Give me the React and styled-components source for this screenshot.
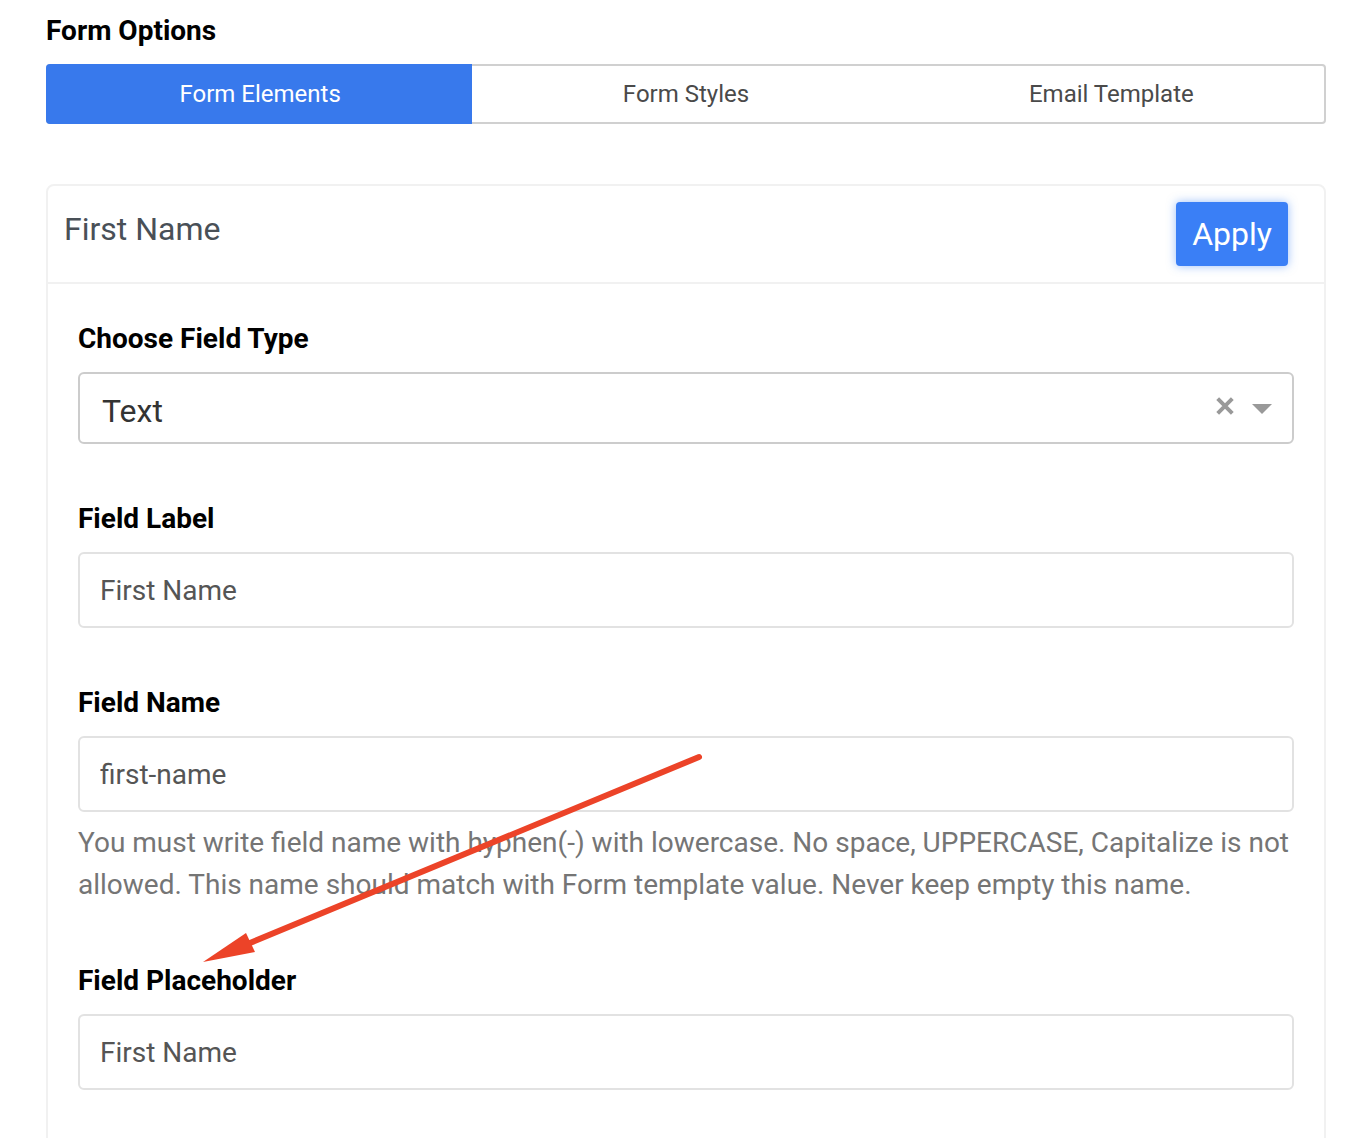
import styled, { createGlobalStyle } from 'styled-components'

const GlobalStyle = createGlobalStyle`
    html, body {
        margin: 0;
        padding: 0;
        background: #fff;
        overflow: hidden;
    }
    * {
        box-sizing: border-box;
    }
`

export default function App() {
    return (
        <Page>
            <GlobalStyle />
            <Title>Form Options</Title>
            <Tabs>
                <Tab $active>Form Elements</Tab>
                <Tab>Form Styles</Tab>
                <Tab>Email Template</Tab>
            </Tabs>
            <Card>
                <CardHeader>
                    <CardTitle>First Name</CardTitle>
                    <ApplyButton>Apply</ApplyButton>
                </CardHeader>
                <CardBody>
                    <Field>
                        <Label>Choose Field Type</Label>
                        <Select>
                            <SelectValue>Text</SelectValue>
                            <ClearIcon viewBox="0 0 16 16">
                                <path d="M1.5 1.5 L14.5 14.5 M14.5 1.5 L1.5 14.5" />
                            </ClearIcon>
                            <Caret />
                        </Select>
                    </Field>
                    <Field>
                        <Label>Field Label</Label>
                        <Input defaultValue="First Name" />
                    </Field>
                    <Field>
                        <Label>Field Name</Label>
                        <Input defaultValue="first-name" />
                        <Help>
                            You must write field name with hyphen(-) with lowercase. No space, UPPERCASE, Capitalize is not allowed. This name should match with Form template value. Never keep empty this name.
                        </Help>
                    </Field>
                    <Field>
                        <Label>Field Placeholder</Label>
                        <Input defaultValue="First Name" />
                    </Field>
                </CardBody>
            </Card>
            <Arrow viewBox="0 0 1370 1138">
                <path d="M699 757 L250 943" />
                <polygon points="203,962 246,933 255,952" />
            </Arrow>
        </Page>
    )
}

const Page = styled.div`
    position: relative;
    width: 1370px;
    height: 1138px;
    overflow: hidden;
    padding: 14px 44px 0 46px;
    font-family: Roboto, "Liberation Sans", sans-serif;
`
const Title = styled.h2`
    margin: 0 0 16px;
    font-size: 28px;
    line-height: 34px;
    font-weight: 700;
    color: #000;
`
const Tabs = styled.div`
    display: grid;
    grid-template-columns: repeat(3, 1fr);
    height: 60px;
    border: 2px solid #d0d0d0;
    border-radius: 4px;
    margin-bottom: 60px;
`
const Tab = styled.div`
    display: flex;
    align-items: center;
    justify-content: center;
    margin: ${(p) => (p.$active ? '-2px 1px -2px -2px' : '0')};
    padding-left: ${(p) => (p.$active ? '2px' : '0')};
    font-size: 24px;
    color: ${(p) => (p.$active ? '#fff' : '#4a4a4a')};
    background: ${(p) => (p.$active ? '#3879ec' : 'transparent')};
    border-radius: ${(p) => (p.$active ? '4px 0 0 4px' : '0')};
`
const Card = styled.div`
    border: 2px solid #f1f1f1;
    border-radius: 8px;
    height: 1100px;
`
const CardHeader = styled.div`
    display: flex;
    justify-content: space-between;
    align-items: flex-start;
    height: 98px;
    padding: 16px 36px 0 16px;
    border-bottom: 2px solid #f1f1f1;
`
const CardTitle = styled.div`
    font-size: 32px;
    line-height: 54px;
    color: #495057;
`
const ApplyButton = styled.button`
    width: 112px;
    height: 64px;
    border: none;
    border-radius: 4px;
    background: #3a7ff6;
    color: #fff;
    font-family: inherit;
    font-size: 32px;
    padding: 0;
    box-shadow: 0 0 10px rgba(58, 127, 246, 0.5);
`
const CardBody = styled.div`
    padding: 38px 30px 0;
    display: flex;
    flex-direction: column;
    gap: 58px;
`
const Field = styled.div`
    display: flex;
    flex-direction: column;
`
const Label = styled.label`
    font-size: 28px;
    line-height: 34px;
    font-weight: 700;
    color: #000;
    margin-bottom: 16px;
`
const Select = styled.div`
    display: flex;
    align-items: center;
    height: 72px;
    padding: 0 20px 0 22px;
    border: 2px solid #ccc;
    border-radius: 6px;
`
const SelectValue = styled.span`
    flex: 1;
    font-size: 32px;
    color: #333;
    padding-top: 6px;
`
const ClearIcon = styled.svg`
    width: 18px;
    height: 18px;
    margin: -4px 18px 0 0;
    fill: none;
    stroke: #999;
    stroke-width: 3.5;
`
const Caret = styled.span`
    width: 0;
    height: 0;
    border-left: 10px solid transparent;
    border-right: 10px solid transparent;
    border-top: 10px solid #999;
    margin-top: 2px;
`
const Input = styled.input`
    width: 100%;
    height: 76px;
    padding: 0 20px;
    border: 2px solid #e2e2e2;
    border-radius: 6px;
    font-family: inherit;
    font-size: 28px;
    color: #555;
    outline: none;
`
const Help = styled.p`
    margin: 10px 0 0;
    font-size: 28px;
    line-height: 42px;
    color: #757575;
`
const Arrow = styled.svg`
    position: absolute;
    left: 0;
    top: 0;
    width: 1370px;
    height: 1138px;
    pointer-events: none;
    path {
        fill: none;
        stroke: #ec4328;
        stroke-width: 6;
        stroke-linecap: round;
    }
    polygon {
        fill: #ec4328;
    }
`
